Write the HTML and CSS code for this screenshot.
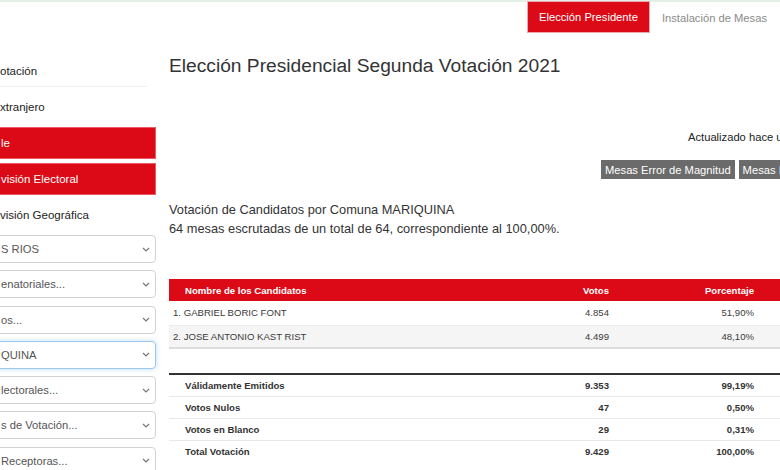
FILE: index.html
```html
<!DOCTYPE html>
<html lang="es">
<head>
<meta charset="utf-8">
<title>Elección Presidencial Segunda Votación 2021</title>
<link rel="stylesheet" href="styles.css">
</head>
<body>
<div class="page">
  <header class="topbar">
    <nav class="tabs">
      <a class="tab active" href="#">Elección Presidente</a>
      <a class="tab" href="#">Instalación de Mesas</a>
    </nav>
  </header>
  <div class="layout">
    <aside class="sidebar">
      <div class="side-item sep">otación</div>
      <div class="side-item">xtranjero</div>
      <div class="side-item red">le</div>
      <div class="side-item red">visión Electoral</div>
      <div class="side-item">visión Geográfica</div>
      <div class="select"><span>S RIOS</span><svg class="chev" viewBox="0 0 8 5"><polyline points="1,1 4,4 7,1"/></svg></div>
      <div class="select"><span>enatoriales...</span><svg class="chev" viewBox="0 0 8 5"><polyline points="1,1 4,4 7,1"/></svg></div>
      <div class="select"><span>os...</span><svg class="chev" viewBox="0 0 8 5"><polyline points="1,1 4,4 7,1"/></svg></div>
      <div class="select focus"><span>QUINA</span><svg class="chev" viewBox="0 0 8 5"><polyline points="1,1 4,4 7,1"/></svg></div>
      <div class="select"><span>lectorales...</span><svg class="chev" viewBox="0 0 8 5"><polyline points="1,1 4,4 7,1"/></svg></div>
      <div class="select"><span>s de Votación...</span><svg class="chev" viewBox="0 0 8 5"><polyline points="1,1 4,4 7,1"/></svg></div>
      <div class="select"><span>Receptoras...</span><svg class="chev" viewBox="0 0 8 5"><polyline points="1,1 4,4 7,1"/></svg></div>
    </aside>
    <main class="main">
      <h1 class="title">Elección Presidencial Segunda Votación 2021</h1>
      <div class="updated">Actualizado hace un momento</div>
      <div class="buttons">
        <span class="btn">Mesas Error de Magnitud</span>
        <span class="btn">Mesas Descuadradas</span>
      </div>
      <p class="intro">Votación de Candidatos por Comuna MARIQUINA<br>64 mesas escrutadas de un total de 64, correspondiente al 100,00%.</p>
      <table class="results">
        <colgroup><col class="c1"><col class="c2"><col class="c3"><col></colgroup>
        <thead>
          <tr><th>Nombre de los Candidatos</th><th class="num">Votos</th><th class="num">Porcentaje</th><th></th></tr>
        </thead>
        <tbody>
          <tr><td>1. GABRIEL BORIC FONT</td><td class="num">4.854</td><td class="num">51,90%</td><td></td></tr>
          <tr><td>2. JOSE ANTONIO KAST RIST</td><td class="num">4.499</td><td class="num">48,10%</td><td></td></tr>
        </tbody>
      </table>
      <table class="totals">
        <colgroup><col class="c1"><col class="c2"><col class="c3"><col></colgroup>
        <tbody>
          <tr><td>Válidamente Emitidos</td><td class="num">9.353</td><td class="num">99,19%</td><td></td></tr>
          <tr><td>Votos Nulos</td><td class="num">47</td><td class="num">0,50%</td><td></td></tr>
          <tr><td>Votos en Blanco</td><td class="num">29</td><td class="num">0,31%</td><td></td></tr>
          <tr><td>Total Votación</td><td class="num">9.429</td><td class="num">100,00%</td><td></td></tr>
        </tbody>
      </table>
    </main>
  </div>
</div>
</body>
</html>
```
FILE: styles.css
```css
* { box-sizing: border-box; }
body {
  margin: 0;
  font-family: "Liberation Sans", Arial, sans-serif;
  color: #333;
  background: #fff;
  overflow: hidden;
}
.page {
  width: 780px;
  height: 470px;
  overflow: hidden;
}
.topbar {
  height: 34px;
  border-top: 2px solid #e4efe7;
  display: flex;
  justify-content: flex-end;
}
.tabs {
  display: flex;
  margin-right: 1px;
}
.tab {
  display: flex;
  align-items: center;
  height: 32px;
  padding: 0 12px;
  font-size: 11.2px;
  color: #8a8a8a;
  text-decoration: none;
  white-space: nowrap;
}
.tab.active {
  margin-top: -1px;
  background: #db0a16;
  color: #fff;
  border: 1px solid #eaa9ad;
  padding: 0 11px;
}
.layout {
  display: flex;
  gap: 13px;
}
.sidebar {
  flex: none;
  width: 166px;
  margin-left: -10px;
  padding-top: 21px;
}
.side-item {
  height: 32px;
  margin-bottom: 4px;
  padding-left: 10px;
  display: flex;
  align-items: center;
  font-size: 11.5px;
  color: #222;
  white-space: nowrap;
}
.side-item.sep {
  width: 157px;
  border-bottom: 1px solid #f1f1f1;
}
.side-item.red {
  background: #db0a16;
  color: #fff;
  border: 1px solid #ec5a63;
}
.select {
  height: 28px;
  margin-bottom: 7.3px;
  padding: 0 5px 0 10px;
  border: 1px solid #d2d2d2;
  border-radius: 4px;
  display: flex;
  align-items: center;
  justify-content: space-between;
  font-size: 11.2px;
  color: #555;
  white-space: nowrap;
}
.select.focus {
  border-color: #9cc6ea;
  box-shadow: 0 0 5px rgba(102, 175, 233, 0.45);
}
.chev {
  width: 8px;
  height: 5px;
  fill: none;
  stroke: #777;
  stroke-width: 1.2;
}
.main {
  flex: none;
  width: 680px;
}
.title {
  margin: 21px 0 0;
  font-size: 19.2px;
  font-weight: normal;
  line-height: 21px;
  color: #333;
}
.updated {
  margin-top: 53px;
  padding-left: 519px;
  font-size: 11.2px;
  line-height: 16px;
  color: #222;
  white-space: nowrap;
}
.buttons {
  display: flex;
  gap: 4px;
  margin-top: 15px;
  padding-left: 432px;
}
.btn {
  display: flex;
  align-items: center;
  height: 19px;
  padding: 0 4px;
  background: #6b6b6b;
  color: #fff;
  font-size: 11.2px;
  white-space: nowrap;
  flex: none;
}
.intro {
  margin: 21px 0 0;
  font-size: 12.8px;
  line-height: 19px;
  color: #333;
}
table {
  width: 680px;
  border-collapse: collapse;
  table-layout: fixed;
  font-size: 9.6px;
}
col.c1 { width: 345px; }
col.c2 { width: 100px; }
col.c3 { width: 145px; }
.num { text-align: right; }
.results {
  margin-top: 41px;
  border-bottom: 2px solid #dcdcdc;
}
.results th {
  height: 22px;
  padding: 0 5px;
  background: #db0a16;
  color: #fff;
  font-weight: bold;
  text-align: left;
}
.results th.num { text-align: right; }
.results th:first-child { padding-left: 16px; }
.results td {
  height: 24px;
  padding: 0 5px;
  color: #3a3a3a;
}
.results td:first-child { padding-left: 4px; }
.results tbody tr + tr td {
  background: #f5f5f5;
  border-top: 1px solid #ececec;
  height: 23px;
}
.totals {
  margin-top: 24px;
  border-top: 2px solid #333;
  font-weight: bold;
}
.totals td {
  height: 22.2px;
  padding: 0 5px;
  color: #333;
}
.totals td:first-child { padding-left: 16px; }
.totals tr + tr td { border-top: 1px solid #e8e8e8; }
```
